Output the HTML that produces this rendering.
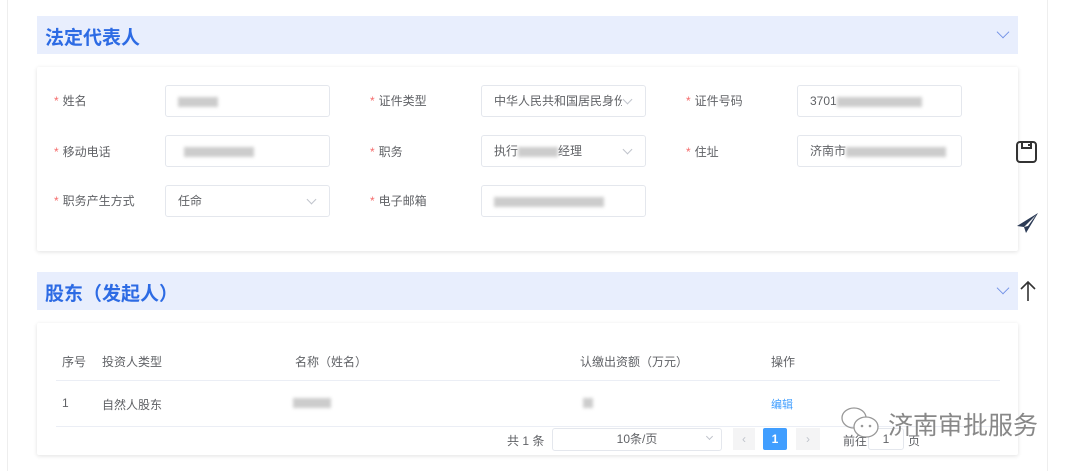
<!DOCTYPE html>
<html><head><meta charset="utf-8"><style>
*{margin:0;padding:0;box-sizing:border-box}
body{width:1080px;height:471px;background:#fff;position:relative;overflow:hidden;font-family:"Liberation Sans","Noto Sans CJK SC",sans-serif;font-size:12px;color:#606266}
.a{position:absolute}
.hdr{left:37px;width:981px;height:38px;background:#e8eefd;}
.hdr span{position:absolute;left:8px;top:7px;font-size:19px;font-weight:bold;color:#2d6be4}
.chev{position:absolute;right:10px;top:11px;width:10px;height:10px;border-right:1.3px solid #6f8fe6;border-bottom:1.3px solid #6f8fe6;transform:rotate(45deg) scale(0.9)}
.card{left:37px;width:981px;background:#fff;box-shadow:0 1px 4px rgba(0,0,0,.12);border-radius:2px}
.lab{font-size:12px;color:#606266}
.lab:before{content:"*";color:#f56c6c;margin-right:4px}
.inp{width:165px;height:32px;border:1px solid #e4e7ed;border-radius:3px;background:#fff;padding-left:12px;line-height:30px;color:#606266;white-space:nowrap;overflow:hidden}
.blur{display:inline-block;height:10px;background:#ccc;vertical-align:middle;filter:blur(1.5px)}
.sel:after{content:"";position:absolute;right:14px;top:10px;width:6px;height:6px;border-right:1px solid #c0c4cc;border-bottom:1px solid #c0c4cc;transform:rotate(45deg)}
.clip{display:inline-block;width:128px;overflow:hidden;vertical-align:top}
.th{top:353px;color:#606266}
</style></head><body>
<div class="a" style="left:7px;top:0;width:1px;height:471px;background:#eee"></div>
<div class="a" style="left:1047px;top:0;width:1px;height:471px;background:#eee"></div>

<div class="a hdr" style="top:16px"><span>法定代表人</span><div class="chev"></div></div>
<div class="a card" style="top:67px;height:184px"></div>

<div class="a lab" style="left:54px;top:92px">姓名</div>
<div class="a inp" style="left:165px;top:85px"><span class="blur" style="width:40px;margin-left:0"></span></div>
<div class="a lab" style="left:370px;top:92px">证件类型</div>
<div class="a inp sel" style="left:481px;top:85px"><span class="clip">中华人民共和国居民身份证</span></div>
<div class="a lab" style="left:686px;top:92px">证件号码</div>
<div class="a inp" style="left:797px;top:85px">3701<span class="blur" style="width:85px"></span></div>

<div class="a lab" style="left:54px;top:143px">移动电话</div>
<div class="a inp" style="left:165px;top:135px"><span class="blur" style="width:70px;margin-left:6px"></span></div>
<div class="a lab" style="left:370px;top:143px">职务</div>
<div class="a inp sel" style="left:481px;top:135px">执行<span class="blur" style="width:40px"></span>经理</div>
<div class="a lab" style="left:686px;top:143px">住址</div>
<div class="a inp" style="left:797px;top:135px">济南市<span class="blur" style="width:100px"></span></div>

<div class="a lab" style="left:54px;top:192px">职务产生方式</div>
<div class="a inp sel" style="left:165px;top:185px">任命</div>
<div class="a lab" style="left:370px;top:192px">电子邮箱</div>
<div class="a inp" style="left:481px;top:185px"><span class="blur" style="width:110px"></span></div>

<div class="a hdr" style="top:272px"><span>股东（发起人）</span><div class="chev"></div></div>
<div class="a card" style="top:323px;height:132px"></div>

<div class="a th" style="left:62px">序号</div>
<div class="a th" style="left:102px">投资人类型</div>
<div class="a th" style="left:295px">名称（姓名）</div>
<div class="a th" style="left:580px">认缴出资额（万元）</div>
<div class="a th" style="left:771px">操作</div>
<div class="a" style="left:56px;top:380px;width:944px;height:1px;background:#ebeef5"></div>
<div class="a" style="left:62px;top:396px">1</div>
<div class="a" style="left:102px;top:396px">自然人股东</div>
<div class="a blur" style="left:293px;top:398px;width:38px"></div>
<div class="a blur" style="left:583px;top:398px;width:10px"></div>
<div class="a" style="left:771px;top:396px;color:#409eff;font-size:11px">编辑</div>
<div class="a" style="left:56px;top:426px;width:944px;height:1px;background:#ebeef5"></div>

<div class="a" style="left:507px;top:432px">共 1 条</div>
<div class="a inp" style="left:552px;top:428px;width:170px;height:23px;line-height:21px;text-align:center;padding:0">10条/页</div>
<div class="a" style="left:707px;top:434px;width:5px;height:5px;border-right:1px solid #c0c4cc;border-bottom:1px solid #c0c4cc;transform:rotate(45deg)"></div>
<div class="a" style="left:733px;top:428px;width:22px;height:22px;background:#f4f4f5;color:#c0c4cc;text-align:center;line-height:22px">‹</div>
<div class="a" style="left:763px;top:428px;width:24px;height:22px;background:#409eff;color:#fff;text-align:center;line-height:22px;font-weight:bold;border-radius:2px">1</div>
<div class="a" style="left:796px;top:428px;width:24px;height:22px;background:#f4f4f5;color:#c0c4cc;text-align:center;line-height:22px">›</div>
<div class="a" style="left:843px;top:432px">前往</div>
<div class="a" style="left:868px;top:428px;width:36px;height:22px;border:1px solid #e4e7ed;border-radius:3px;text-align:center;line-height:20px">1</div>
<div class="a" style="left:908px;top:432px">页</div>

<svg class="a" style="left:838px;top:405px" width="46" height="36" viewBox="0 0 46 36"><ellipse cx="16" cy="13" rx="12" ry="10" fill="none" stroke="#999" stroke-width="1.3"/><ellipse cx="28" cy="22" rx="12" ry="10" fill="#fff" stroke="#999" stroke-width="1.3"/><circle cx="24" cy="21" r="1.3" fill="#999"/><circle cx="32" cy="21" r="1.3" fill="#999"/></svg>
<div class="a" style="left:888px;top:406px;font-size:25px;color:#888">济南审批服务</div>

<svg class="a" style="left:1015px;top:140px" width="24" height="24" viewBox="0 0 24 24"><rect x="2" y="2" width="19" height="20" rx="3" fill="none" stroke="#333" stroke-width="2"/><path d="M7 2v6h9V2" fill="none" stroke="#333" stroke-width="2"/><rect x="13" y="4" width="2" height="2" fill="#333"/></svg>
<svg class="a" style="left:1016px;top:211px" width="24" height="24" viewBox="0 0 24 24"><path d="M22 2L1 15l7 1 2 6 12-20z" fill="#2b3a55"/><path d="M8 16l12-12-8 11z" fill="#fff"/></svg>
<svg class="a" style="left:1018px;top:280px" width="20" height="22" viewBox="0 0 20 22"><path d="M10 21V2M3 9l7-7 7 7" fill="none" stroke="#333" stroke-width="1.6"/></svg>
</body></html>
